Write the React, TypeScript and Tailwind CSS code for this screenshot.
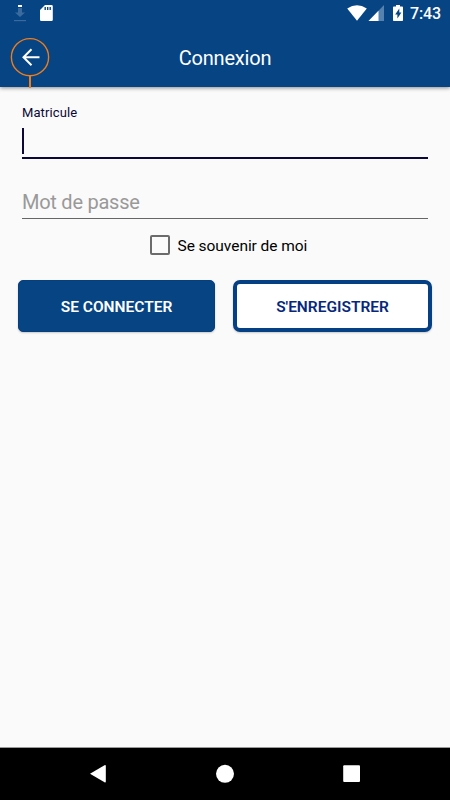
function StatusBar() {
    return (
        <div className="h-[28px] flex items-center justify-between text-white">
            <svg width="60" height="28" viewBox="0 0 60 28">
                {/* Download */}
                <rect x="18" y="5" width="4" height="2" fill="#ffffff" />
                <path d="M18 8h4v4.5h3L20 17l-5-4.5h3z" fill="#3b6b9e" />
                <rect x="14" y="20" width="12" height="1.2" fill="#3b6b9e" />
                {/* SD card */}
                <path
                    fillRule="evenodd"
                    fill="#ffffff"
                    d="M45 5h6.5q1.3 0 1.3 1.3v13.4q0 1.3-1.3 1.3H41.3q-1.3 0-1.3-1.3V10zM44.5 7v3h1.4V7zM47 7v3h1.4V7zM49.5 7v3h1.4V7z"
                />
            </svg>
            <div className="flex items-center">
                <svg width="70" height="28" viewBox="340 0 70 28">
                    {/* Wifi */}
                    <path d="M347.2 8.6Q357 2 366.8 8.6L357 20.8z" fill="#ffffff" />
                    {/* Signal */}
                    <path d="M384 5v16h-15.5z" fill="#5582af" />
                    <path d="M378.5 10.7V21h-10z" fill="#ffffff" />
                    {/* Battery */}
                    <path
                        fillRule="evenodd"
                        fill="#ffffff"
                        d="M396 5h4v1.6h2.2q.8 0 .8.8v12.8q0 .8-.8.8h-8.4q-.8 0-.8-.8V7.4q0-.8.8-.8H396zM399.3 8.5l-4.1 6h2.2v4l4-6h-2.1z"
                    />
                </svg>
                <span className="w-[40px] text-[16px] leading-[28px] tracking-[-0.1px] font-medium whitespace-nowrap">7:43</span>
            </div>
        </div>
    )
}

export default function App() {
    return (
        <div className="w-[450px] h-[800px] flex flex-col overflow-hidden bg-[#fafafa] font-['Roboto',sans-serif]">
            {/* Header */}
            <header className="h-[87px] shrink-0 bg-[#064484] shadow-[0_1px_4px_rgba(0,0,0,0.45)]">
                <StatusBar />
                <div className="h-[59px] grid grid-cols-[60px_1fr_60px]">
                    <button type="button" aria-label="Retour">
                        <svg width="60" height="59" viewBox="0 28 60 59" fill="none" className="block">
                            <circle cx="30" cy="56.2" r="18.6" stroke="#ee7d1b" strokeWidth="1.4" />
                            <path d="M30 75v12" stroke="#ee7d1b" strokeWidth="2" />
                            <path d="M39.5 56.2H23.5M31.5 48.2l-8 8 8 8" stroke="#ffffff" strokeWidth="2" />
                        </svg>
                    </button>
                    <h1 className="text-center text-[20px] leading-[60px] tracking-[-0.2px] text-white">Connexion</h1>
                </div>
            </header>

            {/* Login form */}
            <main className="flex-1">
                <div className="mx-[22px] pt-[18px]">
                    <label className="block h-[16px] text-[13px] leading-[16px] tracking-[0.1px] text-[#0b0838]">Matricule</label>
                    <div className="h-[38px] pt-[7px] border-b-2 border-[#0b0838]">
                        <div className="w-[2px] h-[26px] bg-[#0b0838]" />
                    </div>
                    <div className="mt-[29px] h-[31px] border-b border-[#666666] text-[20px] leading-[28px] tracking-[-0.25px] text-[#999999]">
                        Mot de passe
                    </div>
                </div>

                <label className="ml-[150px] mt-[16px] h-[20px] flex items-center">
                    <span className="w-[20px] h-[20px] rounded-[2px] border-2 border-[#6b6b6b]" />
                    <span className="ml-[7.5px] pt-px text-[15.5px] leading-[20px] tracking-[-0.05px] text-black">Se souvenir de moi</span>
                </label>

                <div className="mt-[25px] ml-[18px] flex gap-[18px] text-[15.5px] font-semibold">
                    <button type="button" className="w-[197px] h-[52px] pt-[3px] rounded-[5px] bg-[#064484] border border-[#063f7d] text-white shadow-[0_1px_2px_rgba(0,0,0,0.2)]">
                        SE CONNECTER
                    </button>
                    <button type="button" className="w-[199px] h-[52px] pt-[3px] rounded-[7px] bg-white border-4 border-[#064084] text-[#06287c] shadow-[0_1px_2px_rgba(0,0,0,0.2)]">
                        S'ENREGISTRER
                    </button>
                </div>
            </main>

            {/* Android navigation */}
            <nav className="h-[53px] shrink-0 bg-black border-t border-[#999999]">
                <svg width="450" height="52" viewBox="0 748 450 52" fill="#ffffff">
                    <path d="M90 773.8l14.5-8.6q1.3-.6 1.3.8v15.5q0 1.4-1.3.8z" />
                    <circle cx="225" cy="773.8" r="9" />
                    <rect x="343.2" y="765.2" width="16.8" height="16.8" rx="1" />
                </svg>
            </nav>
        </div>
    )
}
